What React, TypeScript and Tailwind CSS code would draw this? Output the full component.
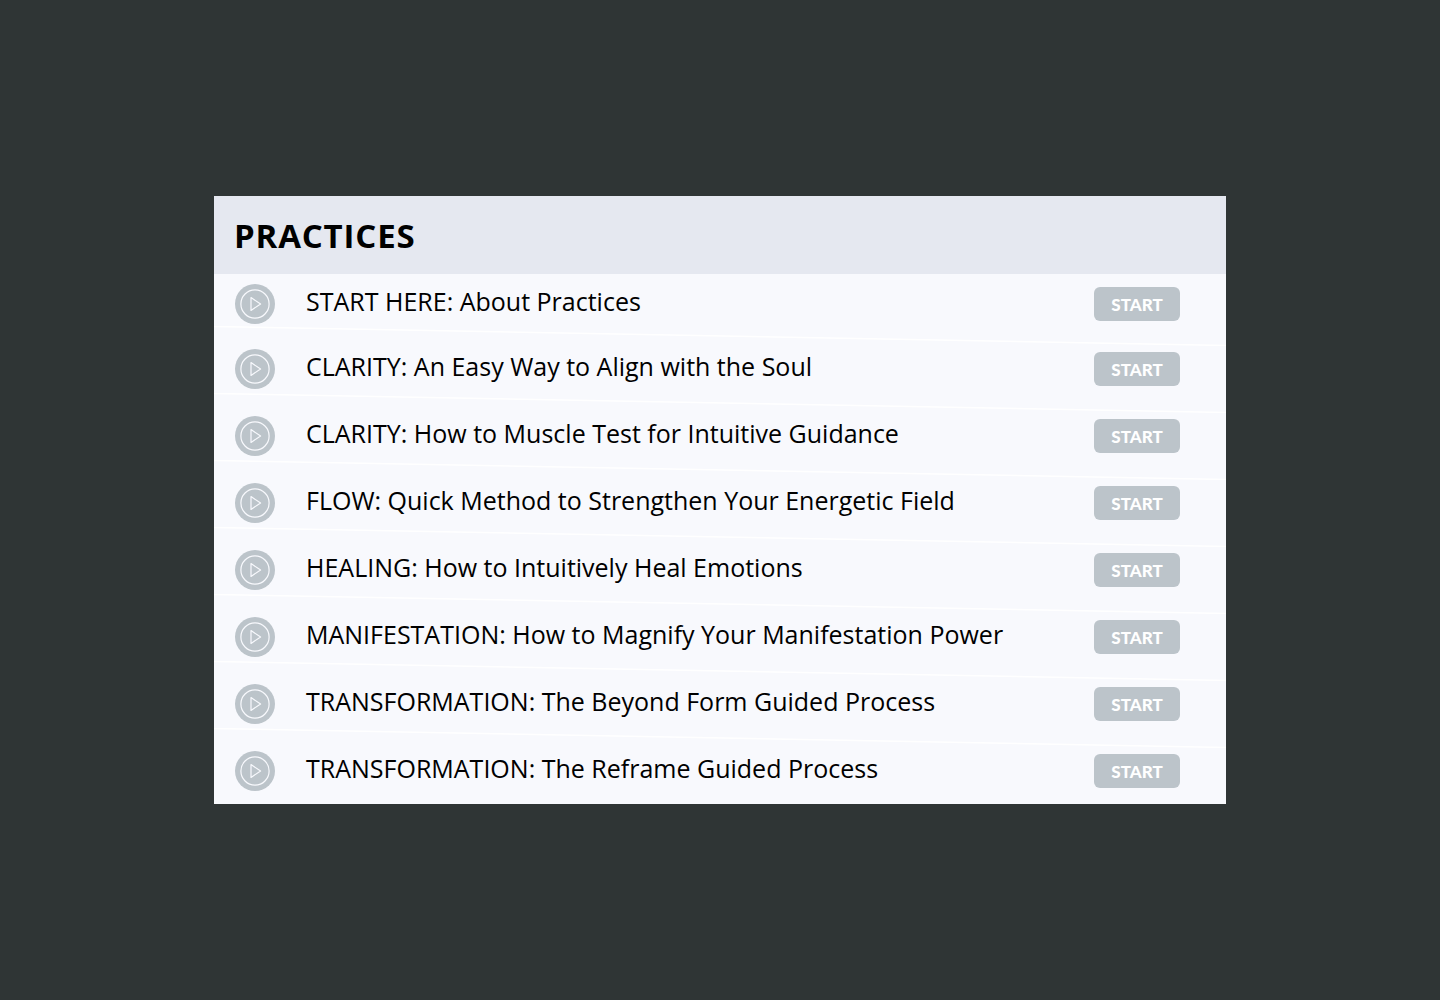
const practices = [
  'START HERE: About Practices',
  'CLARITY: An Easy Way to Align with the Soul',
  'CLARITY: How to Muscle Test for Intuitive Guidance',
  'FLOW: Quick Method to Strengthen Your Energetic Field',
  'HEALING: How to Intuitively Heal Emotions',
  'MANIFESTATION: How to Magnify Your Manifestation Power',
  'TRANSFORMATION: The Beyond Form Guided Process',
  'TRANSFORMATION: The Reframe Guided Process',
];

function PlayIcon() {
  return (
    <svg className="size-10 shrink-0" viewBox="0 0 40 40" fill="none" aria-hidden="true">
      <circle cx="20" cy="20" r="20" fill="#bcc4ca" />
      <circle cx="20" cy="20" r="14.1" stroke="#f8f9fd" strokeWidth="1.2" />
      <path d="M16 13.6V26.4L25.6 20Z" stroke="#f8f9fd" strokeWidth="1.2" strokeLinejoin="round" />
    </svg>
  );
}

/* Slanted hairline between two neighbouring rows. */
function Divider() {
  return (
    <svg
      className="pointer-events-none absolute inset-x-0 -bottom-[11px] h-5 w-full"
      viewBox="0 0 100 20"
      preserveAspectRatio="none"
      aria-hidden="true"
    >
      <line x1="0" y1="0.5" x2="100" y2="19.5" stroke="#ffffff" strokeWidth="1.5" vectorEffect="non-scaling-stroke" />
    </svg>
  );
}

function PracticeRow({ title, last }: { title: string; last: boolean }) {
  return (
    <li className="relative flex items-center pt-3.5 pr-[46px] pb-[13px] pl-[21px] first:pt-2.5 first:pb-[11px]">
      <PlayIcon />
      <span className="ml-[31px] flex-1 pb-1.5 text-[25px] leading-[34px]">{title}</span>
      <button
        type="button"
        aria-label={`Start ${title}`}
        className="h-[34px] w-[86px] shrink-0 cursor-pointer rounded-md bg-[#bcc4ca] pt-0.5 font-['Lato',sans-serif] text-[17px] leading-8 font-black text-white"
      >
        START
      </button>
      {!last && <Divider />}
    </li>
  );
}

export default function App() {
  return (
    <main className="flex min-h-screen items-center justify-center bg-[#2f3535] px-6 font-['Open_Sans',sans-serif] text-black">
      <section className="w-full max-w-[1012px] bg-[#f8f9fd]">
        <header className="bg-[#e5e8f0] px-5 pt-[17px] pb-[15px]">
          <h1 className="text-[33px] leading-[46px] font-bold tracking-wide">PRACTICES</h1>
        </header>
        <ul>
          {practices.map((title, i) => (
            <PracticeRow key={title} title={title} last={i === practices.length - 1} />
          ))}
        </ul>
      </section>
    </main>
  );
}
